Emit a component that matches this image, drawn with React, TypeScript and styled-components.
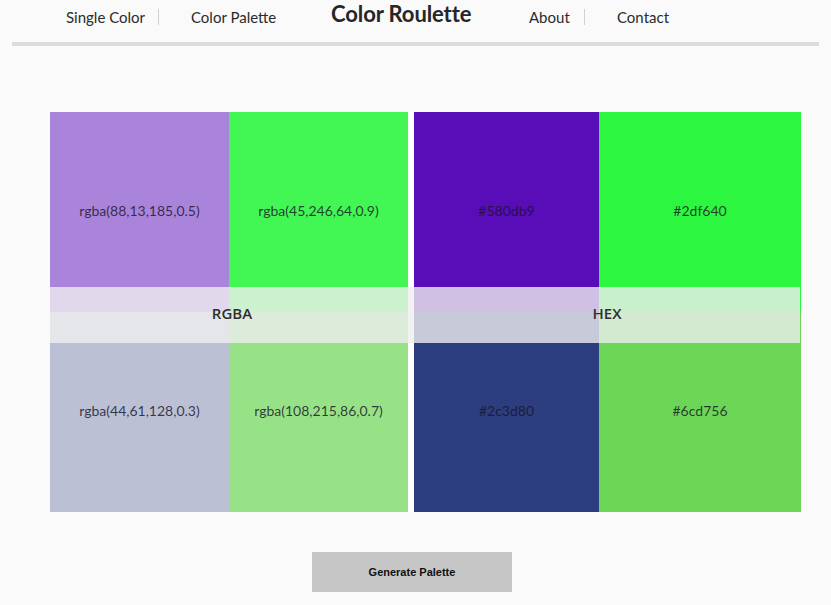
import React from "react";
import styled, { createGlobalStyle } from "styled-components";

const Global = createGlobalStyle`
  html, body { margin: 0; padding: 0; background: #fafafa; }
  body { font-family: "Lato", "Open Sans", sans-serif; color: #333; }
`;

const Header = styled.header`
  height: 46px;
  display: flex;
  flex-direction: column;
`;

const Nav = styled.nav`
  display: flex;
  align-items: center;
  height: 34px;
  padding-left: 66px;
`;

const NavLink = styled.a<{ $w: number }>`
  width: ${(p) => p.$w}px;
  font-family: "Lato", sans-serif;
  font-size: 15px;
  color: #2b2b2b;
  text-decoration: none;
  white-space: nowrap;
`;

const Sep = styled.span<{ $w: number }>`
  width: ${(p) => p.$w}px;
  display: flex;
  align-items: center;
  &::before {
    content: "";
    width: 1px;
    height: 16px;
    background: #d0d0d0;
  }
`;

const Title = styled.h1<{ $w: number }>`
  width: ${(p) => p.$w}px;
  margin: 0 0 8px 0;
  font-family: "Lato", sans-serif;
  font-weight: 700;
  font-size: 22px;
  color: #262626;
  white-space: nowrap;
  letter-spacing: -0.1px;
`;

const Rule = styled.div`
  margin: 8px 12px 0 12px;
  height: 4px;
  background: #dcdcdc;
  flex: none;
`;

const Main = styled.main`
  padding: 66px 0 0 50px;
`;

const Board = styled.div`
  position: relative;
  width: 751px;
  display: grid;
  grid-template-columns: 358px 387px;
  column-gap: 6px;
  background: #ffffff;
`;

const Panel = styled.div<{ $cols: string }>`
  display: grid;
  grid-template-columns: ${(p) => p.$cols};
  grid-template-rows: 200px 200px;
  background: #fafafa;
`;

const Cell = styled.div<{ $bg: string }>`
  background: ${(p) => p.$bg};
  display: flex;
  align-items: center;
  justify-content: center;
  padding-bottom: 3px;
  font-family: "Lato", sans-serif;
  font-size: 14px;
  color: rgba(25, 20, 40, 0.82);
`;

const Overlay = styled.div`
  position: absolute;
  left: 0;
  top: 175px;
  width: 750px;
  height: 56px;
  background: rgba(239, 239, 239, 0.8);
  display: grid;
  grid-template-columns: 364px 386px;
  align-items: center;
`;

const Label = styled.span`
  text-align: center;
  font-family: "Open Sans", sans-serif;
  font-weight: 600;
  font-size: 15px;
  color: #2e2e2e;
  padding-bottom: 4px;
`;

const Button = styled.button`
  display: block;
  margin: 40px 0 0 262px;
  width: 200px;
  height: 40px;
  border: none;
  background: #c6c6c6;
  font-family: "Liberation Sans", Arial, sans-serif;
  font-weight: 700;
  font-size: 11px;
  color: #111;
  padding: 0;
`;

const rgba = [
  "rgba(88,13,185,0.5)",
  "rgba(45,246,64,0.9)",
  "rgba(44,61,128,0.3)",
  "rgba(108,215,86,0.7)",
];
const hex = ["#580db9", "#2df640", "#2c3d80", "#6cd756"];

export default function App() {
  return (
    <>
      <Global />
      <Header>
        <Nav>
          <NavLink $w={92}>Single Color</NavLink>
          <Sep $w={33} />
          <NavLink $w={140}>Color Palette</NavLink>
          <Title $w={198}>Color Roulette</Title>
          <NavLink $w={55}>About</NavLink>
          <Sep $w={33} />
          <NavLink $w={60}>Contact</NavLink>
        </Nav>
        <Rule />
      </Header>
      <Main>
        <Board>
          <Panel $cols="179px 179px">
            {rgba.map((c) => (
              <Cell key={c} $bg={c}>
                {c}
              </Cell>
            ))}
          </Panel>
          <Panel $cols="185px 202px">
            {hex.map((c) => (
              <Cell key={c} $bg={c}>
                {c}
              </Cell>
            ))}
          </Panel>
          <Overlay>
            <Label>RGBA</Label>
            <Label>HEX</Label>
          </Overlay>
        </Board>
        <Button>Generate Palette</Button>
      </Main>
    </>
  );
}
